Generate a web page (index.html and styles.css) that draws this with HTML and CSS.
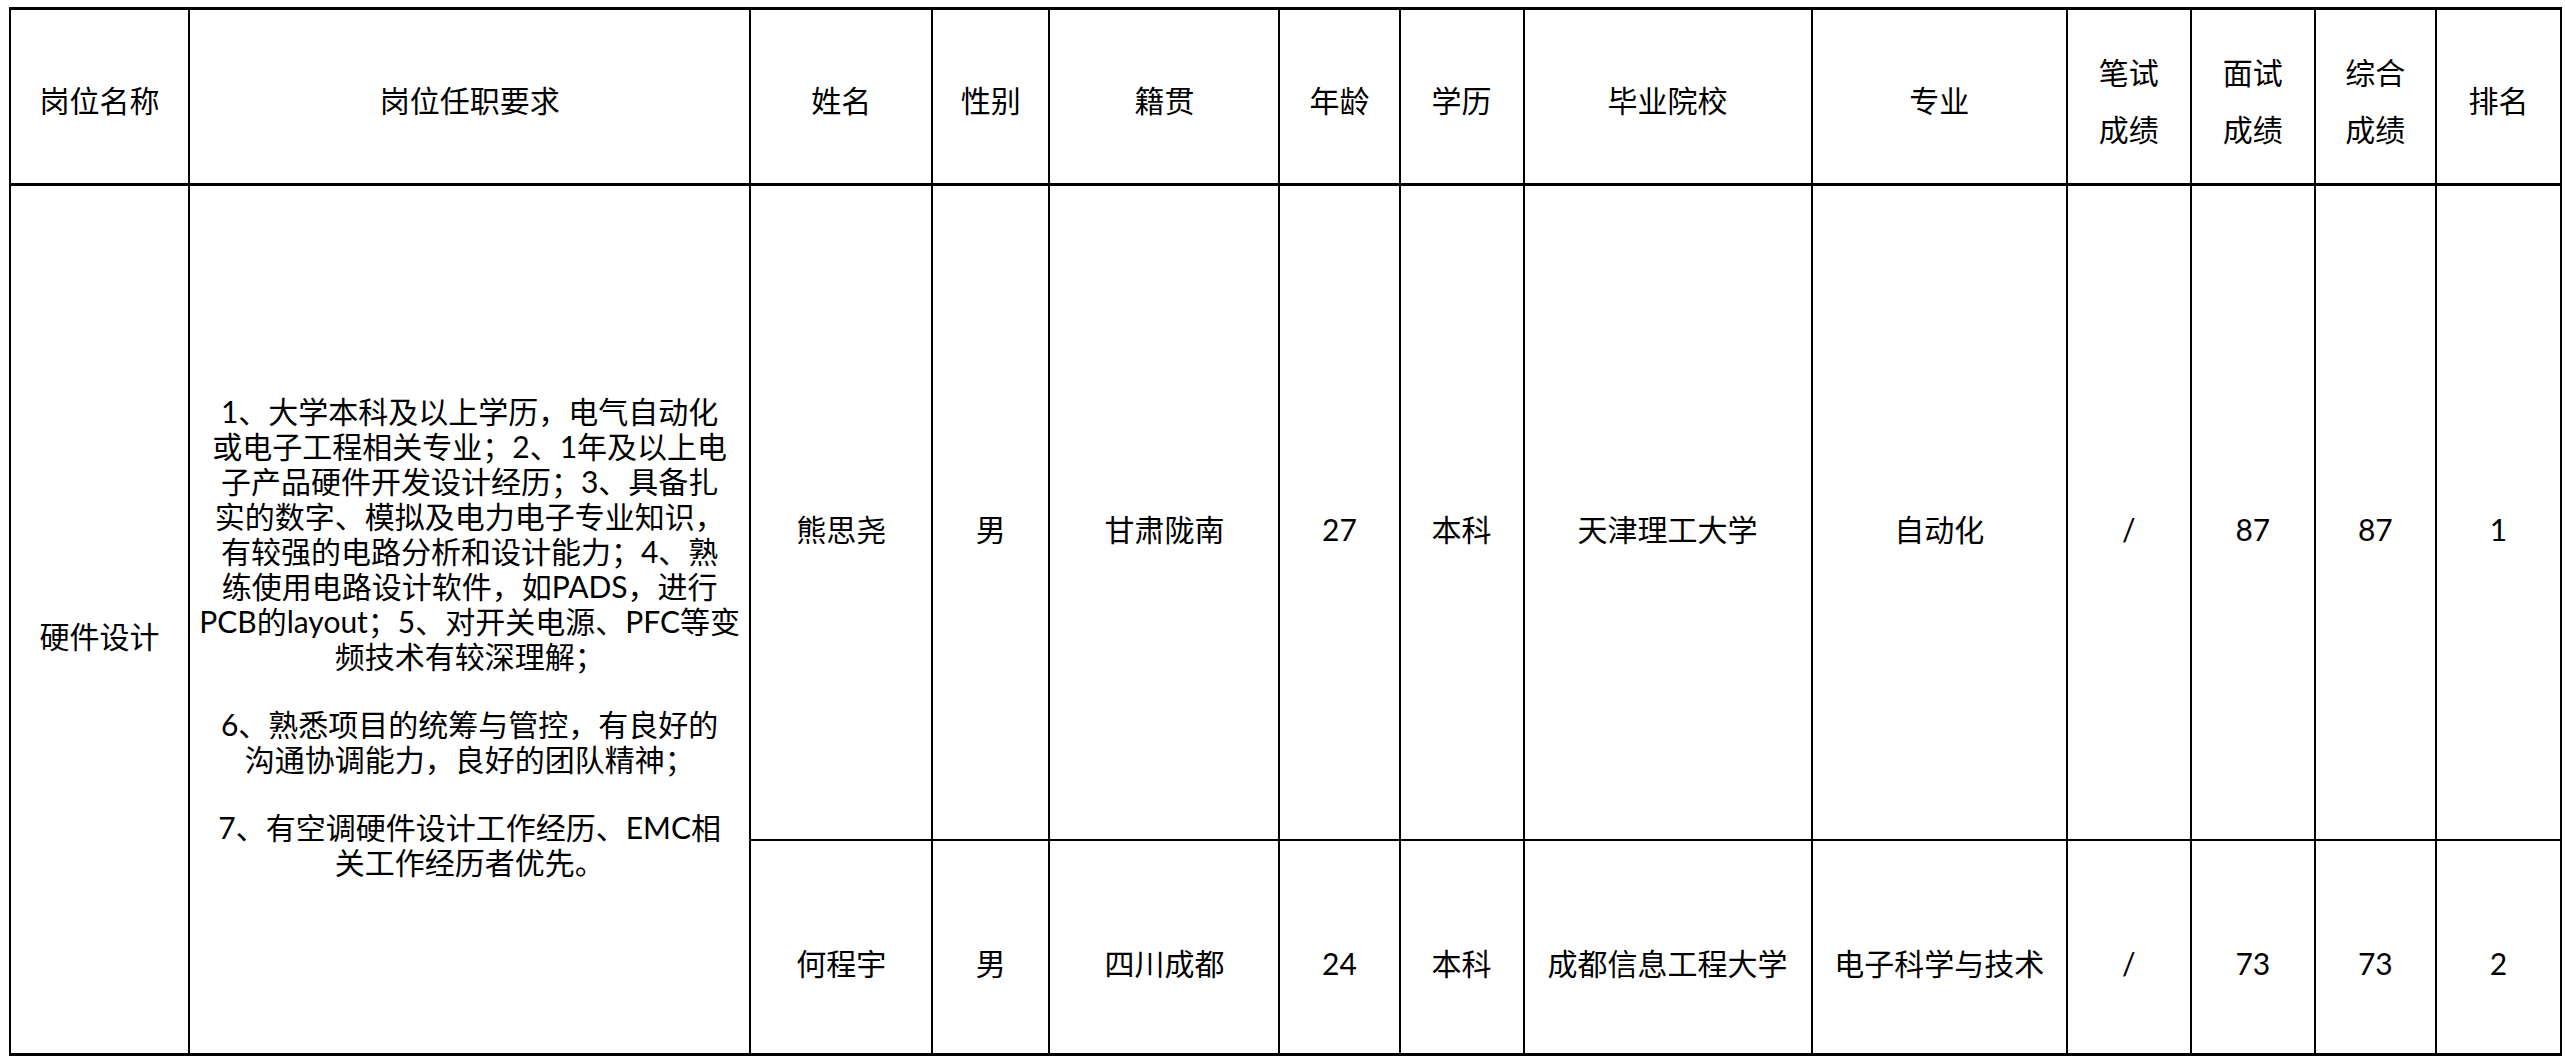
FILE: index.html
```html
<!DOCTYPE html>
<html lang="zh-CN">
<head>
<meta charset="utf-8">
<title>岗位面试成绩</title>
<link rel="stylesheet" href="styles.css">
</head>
<body>
<table class="grid">
  <colgroup>
    <col class="c-pos"><col class="c-req"><col class="c-name"><col class="c-sex"><col class="c-origin"><col class="c-age"><col class="c-edu"><col class="c-school"><col class="c-major"><col class="c-score"><col class="c-score"><col class="c-total"><col class="c-rank">
  </colgroup>
  <thead>
    <tr class="head-row">
      <th>岗位名称</th>
      <th>岗位任职要求</th>
      <th>姓名</th>
      <th>性别</th>
      <th>籍贯</th>
      <th>年龄</th>
      <th>学历</th>
      <th>毕业院校</th>
      <th>专业</th>
      <th><div class="hl">笔试</div><div class="hl">成绩</div></th>
      <th><div class="hl">面试</div><div class="hl">成绩</div></th>
      <th><div class="hl">综合</div><div class="hl">成绩</div></th>
      <th>排名</th>
    </tr>
  </thead>
  <tbody>
    <tr class="row-a">
      <td rowspan="2">硬件设计</td>
      <td rowspan="2" class="req">
        <p>1、大学本科及以上学历，电气自动化<br>或电子工程相关专业；2、1年及以上电<br>子产品硬件开发设计经历；3、具备扎<br>实的数字、模拟及电力电子专业知识，<br>有较强的电路分析和设计能力；4、熟<br>练使用电路设计软件，如PADS，进行<br>PCB的layout；5、对开关电源、PFC等变<br>频技术有较深理解；</p>
        <p>6、熟悉项目的统筹与管控，有良好的<br>沟通协调能力，良好的团队精神；</p>
        <p>7、有空调硬件设计工作经历、EMC相<br>关工作经历者优先。</p>
      </td>
      <td>熊思尧</td>
      <td>男</td>
      <td>甘肃陇南</td>
      <td>27</td>
      <td>本科</td>
      <td>天津理工大学</td>
      <td>自动化</td>
      <td>/</td>
      <td>87</td>
      <td>87</td>
      <td>1</td>
    </tr>
    <tr class="row-b">
      <td>何程宇</td>
      <td>男</td>
      <td>四川成都</td>
      <td>24</td>
      <td>本科</td>
      <td>成都信息工程大学</td>
      <td>电子科学与技术</td>
      <td>/</td>
      <td>73</td>
      <td>73</td>
      <td>2</td>
    </tr>
  </tbody>
</table>
</body>
</html>
```

FILE: styles.css
```css
html, body {
  margin: 0;
  padding: 0;
  background: #ffffff;
}

body {
  font-family: Lato, "Noto Sans CJK SC", sans-serif;
  font-size: 30px;
  color: #000000;
  padding: 7px 0 0 9px;
  text-spacing-trim: space-all;
}

.grid {
  border-collapse: collapse;
  table-layout: fixed;
  width: 2553px;
  border-top: 3px solid #000;
  border-bottom: 3px solid #000;
}

.c-pos { width: 179px; }
.c-req { width: 561px; }
.c-name { width: 182px; }
.c-sex { width: 117px; }
.c-origin { width: 230px; }
.c-age { width: 120px; }
.c-edu { width: 124px; }
.c-school { width: 288px; }
.c-major { width: 255px; }
.c-score { width: 124px; }
.c-total { width: 121px; }
.c-rank { width: 125px; }

.grid th,
.grid td {
  border: 2px solid #000;
  text-align: center;
  vertical-align: middle;
  font-weight: normal;
  line-height: 35px;
  white-space: nowrap;
  padding: 0;
}

.grid th {
  padding-top: 8px;
  border-bottom-width: 3px;
}

.grid td {
  padding-top: 34px;
}

.hl {
  line-height: 57px;
}

.head-row { height: 176px; }
.row-a { height: 655px; }
.row-b { height: 215px; }

.req p {
  margin: 0;
}

.req p + p {
  margin-top: 33px;
}
```
